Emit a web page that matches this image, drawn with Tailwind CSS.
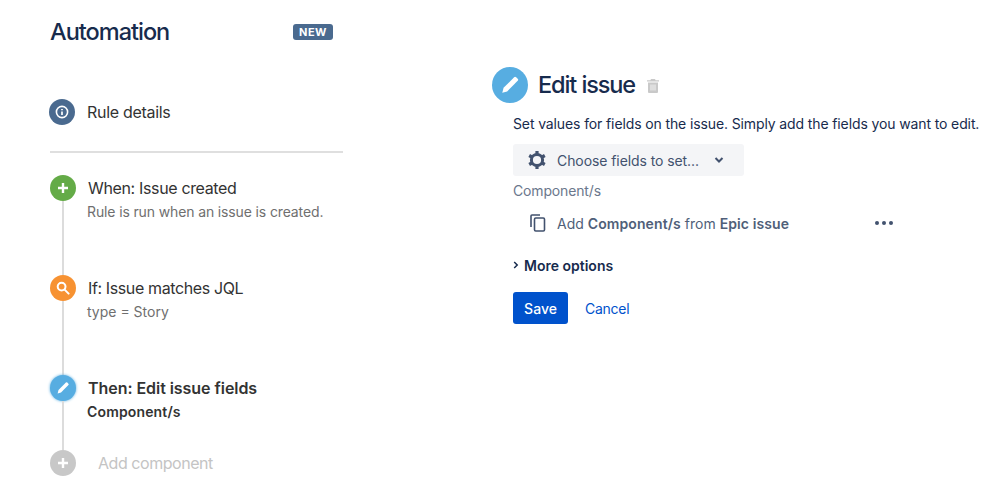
<!DOCTYPE html>
<html lang="en">
<head>
  <meta charset="UTF-8" />
  <title>Automation</title>
  <script src="https://cdn.jsdelivr.net/npm/@tailwindcss/browser@4"></script>
</head>
<body class="bg-white h-[502px] overflow-hidden font-['Inter',sans-serif] text-[#172b4d]">
  <div class="flex">
    <!-- Sidebar -->
    <aside class="w-[293px] ml-[50px] mr-[149px] shrink-0">
      <div class="flex justify-between items-center h-[28px] mt-[18px] pr-[10px]">
        <h1 class="text-[23.5px] font-medium tracking-[-1px] leading-[28px]">Automation</h1>
        <span class="bg-[#4a6a8f] text-white text-[11px] font-bold leading-[16px] px-[6px] rounded-[3px] tracking-[0.5px] -mt-[1px]">NEW</span>
      </div>

      <div class="flex items-center gap-[12px] -ml-[1px] h-[26px] mt-[53px]">
        <span class="w-[26px] h-[26px] rounded-full bg-[#4a6a8f] flex items-center justify-center">
          <svg width="14" height="14" viewBox="0 0 14 14" fill="none" stroke="#fff">
            <circle cx="7" cy="7" r="5.6" stroke-width="1.6" />
            <path d="M7 6.4v3.6M7 4v1.2" stroke-width="1.7" />
          </svg>
        </span>
        <span class="text-[16px] text-[#333] tracking-[-0.3px]">Rule details</span>
      </div>

      <div class="h-[2px] bg-[#dfdfdf] mt-[26px] mb-[22px]"></div>

      <!-- When -->
      <div class="flex gap-[12px] h-[100px]">
        <div class="w-[26px] flex flex-col items-center shrink-0">
          <span class="w-[26px] h-[26px] rounded-full bg-[#64ab47] flex items-center justify-center shrink-0">
            <svg width="12" height="12" viewBox="0 0 12 12" stroke="#fff" stroke-width="2.4"><path d="M6 1v10M1 6h10" /></svg>
          </span>
          <span class="w-[2px] flex-1 bg-[#dcdcdc]"></span>
        </div>
        <div>
          <p class="text-[16px] leading-[26px] text-[#333] tracking-[-0.35px]">When: Issue created</p>
          <p class="text-[14px] leading-[20px] text-[#6f6f6f] -ml-[1px] mt-[1px] tracking-[-0.13px]">Rule is run when an issue is created.</p>
        </div>
      </div>

      <!-- If -->
      <div class="flex gap-[12px] h-[100px]">
        <div class="w-[26px] flex flex-col items-center shrink-0">
          <span class="w-[26px] h-[26px] rounded-full bg-[#f79232] flex items-center justify-center shrink-0">
            <svg width="14" height="14" viewBox="0 0 14 14" fill="none" stroke="#fff" stroke-width="2"><circle cx="5.6" cy="5.6" r="3.9" /><path d="M8.6 8.6l4 4" stroke-linecap="round" /></svg>
          </span>
          <span class="w-[2px] flex-1 bg-[#dcdcdc]"></span>
        </div>
        <div>
          <p class="text-[16px] leading-[26px] text-[#333] tracking-[-0.38px]">If: Issue matches JQL</p>
          <p class="text-[14px] leading-[20px] text-[#6f6f6f] -ml-[1px] mt-[1px]">type = Story</p>
        </div>
      </div>

      <!-- Then -->
      <div class="flex gap-[12px] h-[75px]">
        <div class="w-[26px] flex flex-col items-center shrink-0">
          <span class="w-[26px] h-[26px] rounded-full bg-[#57ade1] shadow-[0_0_3px_#57ade1] flex items-center justify-center shrink-0">
            <svg width="14" height="14" viewBox="0 0 14 14" fill="#fff"><path d="M9.9 1.6a1 1 0 0 1 1.4 0l1.1 1.1a1 1 0 0 1 0 1.4L5 11.5 1.6 12.4l.9-3.4z" /></svg>
          </span>
          <span class="w-[2px] flex-1 bg-[#dcdcdc]"></span>
        </div>
        <div>
          <p class="text-[16px] leading-[26px] font-semibold text-[#333] tracking-[-0.05px]">Then: Edit issue fields</p>
          <p class="text-[14px] leading-[20px] font-semibold text-[#333] -ml-[1px] mt-[1px] tracking-[0.15px]">Component/s</p>
        </div>
      </div>

      <!-- Add -->
      <div class="flex items-center gap-[22px]">
        <span class="w-[26px] h-[26px] rounded-full bg-[#c8c8c8] flex items-center justify-center shrink-0">
          <svg width="12" height="12" viewBox="0 0 12 12" stroke="#fff" stroke-width="2.4"><path d="M6 1v10M1 6h10" /></svg>
        </span>
        <span class="text-[16px] text-[#c4c4c4] tracking-[-0.45px]">Add component</span>
      </div>
    </aside>

    <!-- Panel -->
    <main class="flex-1 pt-[67px]">
      <div class="flex items-center gap-[10px] h-[36px]">
        <span class="w-[36px] h-[36px] rounded-full bg-[#57ade1] flex items-center justify-center shrink-0">
          <svg width="20" height="20" viewBox="0 0 14 14" fill="#fff"><path d="M9.9 1.6a1 1 0 0 1 1.4 0l1.1 1.1a1 1 0 0 1 0 1.4L5 11.5 1.6 12.4l.9-3.4z" /></svg>
        </span>
        <h2 class="text-[23.5px] font-medium tracking-[-1.1px] -mt-[1px]">Edit issue</h2>
        <svg class="ml-[2px] mt-[2px]" width="12" height="14" viewBox="0 0 12 14" fill="#c9c9c9"><path d="M4 0h4l.6 1.2H12v1.4H0V1.2h3.4zM1 3.6h10V13a1 1 0 0 1-1 1H2a1 1 0 0 1-1-1z" /><path d="M4 5.5v6M6 5.5v6M8 5.5v6" stroke="#fff" stroke-width=".8" /></svg>
      </div>

      <div class="pl-[21px]">
        <p class="text-[14px] leading-[20px] mt-[11px] whitespace-nowrap tracking-[-0.12px]">Set values for fields on the issue. Simply add the fields you want to edit.</p>

        <div class="w-[231px] h-[32px] mt-[10px] bg-[#f4f5f7] rounded-[3px] flex items-center pl-[14px] text-[#42526e] text-[14px]">
          <svg width="20" height="20" viewBox="0 0 20 20" fill="none" stroke="#42526e">
            <circle cx="10" cy="10" r="5.6" stroke-width="3" />
            <path d="M10 1v3M10 16v3M2.2 5.5l2.6 1.5M15.2 13l2.6 1.5M2.2 14.5L4.8 13M15.2 7l2.6-1.5" stroke-width="3.2" />
          </svg>
          <span class="ml-[10px] tracking-[-0.08px]">Choose fields to set...</span>
          <svg class="ml-[15px]" width="10" height="8" viewBox="0 0 10 8" fill="none" stroke="#42526e" stroke-width="2"><path d="M1.5 2l3.5 3.5L8.5 2" /></svg>
        </div>

        <p class="text-[14px] leading-[20px] text-[#6b778c] mt-[5px] tracking-[-0.15px]">Component/s</p>

        <div class="flex items-center w-[381px] h-[20px] mt-[12px] pl-[17px] text-[14px] text-[#505f79]">
          <svg width="16" height="18" viewBox="0 0 16 18" fill="none" stroke="#42526e" stroke-width="1.6">
            <path d="M1 13V2a1 1 0 0 1 1-1h8" />
            <rect x="4.5" y="4" width="10" height="13" rx="1.2" />
          </svg>
          <span class="ml-[11px]">Add <b class="font-semibold tracking-[0.1px]">Component/s</b> from <b class="font-semibold tracking-[0.1px]">Epic issue</b></span>
          <span class="ml-auto flex gap-[3px] mr-[1px]">
            <i class="w-[4px] h-[4px] rounded-full bg-[#42526e]"></i>
            <i class="w-[4px] h-[4px] rounded-full bg-[#42526e]"></i>
            <i class="w-[4px] h-[4px] rounded-full bg-[#42526e]"></i>
          </span>
        </div>

        <div class="flex items-center mt-[22px] h-[20px]">
          <svg width="6" height="8" viewBox="0 0 6 8" fill="none" stroke="#172b4d" stroke-width="1.5"><path d="M1.2 1l3 3-3 3" /></svg>
          <span class="ml-[5px] text-[14px] font-semibold">More options</span>
        </div>

        <div class="flex items-center mt-[17px]">
          <button class="w-[55px] h-[32px] bg-[#0052cc] text-white text-[14px] font-medium rounded-[3px]">Save</button>
          <a class="ml-[17px] text-[14px] text-[#0052cc] tracking-[-0.25px]">Cancel</a>
        </div>
      </div>
    </main>
  </div>
</body>
</html>
